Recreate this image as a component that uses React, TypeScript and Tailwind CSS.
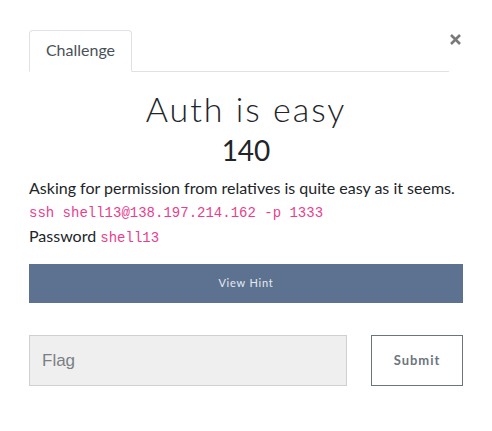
export default function App() {
  return (
    <div className="w-[492px] h-[431px] bg-white px-[29px] pt-[30px]" style={{ fontFamily: 'Lato, "Noto Sans", sans-serif' }}>
      {/* tabs + close */}
      <div className="flex items-start">
        <div className="flex w-[420px] border-b border-[#dee2e6]">
          <div className="h-[42px] w-[103px] -mb-px flex items-center justify-center rounded-t-[4px] border border-[#dee2e6] border-b-white bg-white pb-[2px] text-[16px] text-[#495057]">
            Challenge
          </div>
        </div>
        <button className="ml-auto mt-[3px] mr-[1px] text-[#7a7a7a]">
          <svg width="13" height="13" viewBox="0 0 13 13">
            <path d="M2 2 L11 11 M11 2 L2 11" stroke="currentColor" strokeWidth="2.6" strokeLinecap="butt" />
          </svg>
        </button>
      </div>

      <h1 className="mt-[16px] text-center text-[34px] font-light leading-[42px] tracking-[2px] text-[#212529]">
        Auth is easy
      </h1>
      <div className="mt-[3px] text-center text-[28px] leading-[34px] text-[#212529]">140</div>

      <div className="mt-[9px] text-[16px] text-[#212529]">
        <p className="h-[25px] leading-[24px]">Asking for permission from relatives is quite easy as it seems.</p>
        <p className="h-[23px] text-[14px] leading-[24px] text-[#e83e8c]" style={{ fontFamily: '"Liberation Mono", monospace' }}>
          ssh shell13@138.197.214.162 -p 1333
        </p>
        <p className="h-[24px] leading-[24px]">
          Password{' '}
          <span className="text-[14px] text-[#e83e8c]" style={{ fontFamily: '"Liberation Mono", monospace' }}>
            shell13
          </span>
        </p>
      </div>

      <button className="mt-[16px] flex h-[39px] w-full items-center justify-center bg-[#5c7290] text-[11px] tracking-[0.8px] text-[#e6eaf0]">
        View Hint
      </button>

      <div className="mt-[32px] flex items-center justify-between">
        <div className="flex h-[51px] w-[318px] items-center border border-[#d0d0d3] bg-[#efefef] px-[12px] text-[17px] text-[#7b7f84]" style={{ fontFamily: '"Liberation Sans", Arial, sans-serif' }}>
          Flag
        </div>
        <button className="flex h-[51px] w-[92px] items-center justify-center border border-[#6c757d] text-[13px] font-bold tracking-[1px] text-[#6c757d]">
          Submit
        </button>
      </div>
    </div>
  );
}
